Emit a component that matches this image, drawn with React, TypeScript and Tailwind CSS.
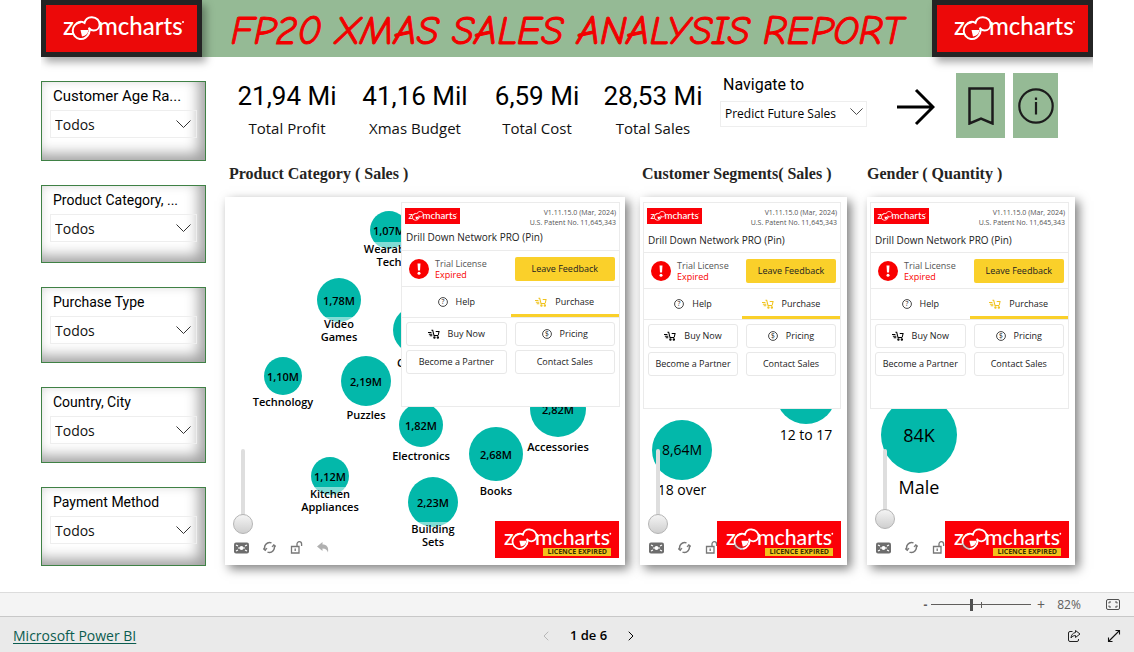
import React, { useState } from "react";
import clsx from "clsx";
import { ChevronLeft, ChevronRight } from "lucide-react";

type Bubble = {
  value: string;
  label: string;
  x: number;
  y: number;
  r: number;
  labelY: number;
};

const slicers = [
  { id: "age", title: "Customer Age Ra...", className: "h-20", titleClass: "text-[15px]" },
  { id: "category", title: "Product Category, ...", className: "h-[78px]", titleClass: "text-sm" },
  { id: "purchase", title: "Purchase Type", className: "h-[76px]", titleClass: "text-sm" },
  { id: "country", title: "Country, City", className: "h-[76px]", titleClass: "text-sm" },
  { id: "payment", title: "Payment Method", className: "h-[79px]", titleClass: "text-sm" },
];

const kpis = [
  { value: "21,94 Mi", label: "Total Profit" },
  { value: "41,16 Mil", label: "Xmas Budget" },
  { value: "6,59 Mi", label: "Total Cost" },
  { value: "28,53 Mi", label: "Total Sales" },
];

const categoryBubbles: Bubble[] = [
  { value: "1,07M", label: "Wearable\nTech", x: 164, y: 33, r: 19, labelY: 45 },
  { value: "1,78M", label: "Video\nGames", x: 114, y: 103, r: 22, labelY: 120 },
  { value: "", label: "Clothes", x: 192, y: 133, r: 24, labelY: 159 },
  { value: "1,10M", label: "Technology", x: 58, y: 179, r: 19, labelY: 198 },
  { value: "2,19M", label: "Puzzles", x: 141, y: 184, r: 25, labelY: 211 },
  { value: "1,82M", label: "Electronics", x: 196, y: 228, r: 22, labelY: 252 },
  { value: "2,68M", label: "Books", x: 271, y: 257, r: 27, labelY: 287 },
  { value: "2,82M", label: "Accessories", x: 333, y: 212, r: 28, labelY: 243 },
  { value: "2,23M", label: "Building\nSets", x: 208, y: 305, r: 25, labelY: 325 },
  { value: "1,12M", label: "Kitchen\nAppliances", x: 105, y: 279, r: 19, labelY: 290 },
];

const segmentBubbles: Bubble[] = [
  { value: "8,64M", label: "18 over", x: 42, y: 253, r: 30, labelY: 283 },
  { value: "", label: "12 to 17", x: 166, y: 197, r: 30, labelY: 228 },
];

const genderBubbles: Bubble[] = [
  { value: "84K", label: "Male", x: 52, y: 238, r: 38, labelY: 278 },
];

const Logo = ({ className }: { className?: string }) => (
  <svg viewBox="-1 -5 124 36" className={className} role="img" aria-label="zoomcharts">
    <g fill="#fff" fontFamily="Lato, sans-serif" fontSize="24" fontWeight="500">
      <text x="0" y="19">z</text>
      <text x="35" y="19">mcharts</text>
    </g>
    <circle cx="120" cy="6" r="1" fill="#fff" />
    <g fill="none" stroke="#fff" strokeWidth="2" strokeLinecap="round">
      <path d="M17 6.500A8.300 8.300 0 1 0 26 17" />
      <path d="M13.500 7.500c2.500-2 5.500-2 8-.5C22.500 3 25.500 1 29 1.200c4.500.2 8 3.500 7.700 7.800-.3 3-2.800 5.500-6 5.500-2 0-3.500-.8-4.500-2" />
      <path d="M26 17.500c.7-1.800.8-3.500.3-5" />
    </g>
    <path d="M17.500 14h8a7.500 7.500 0 0 1-6.500 6.500z" fill="#fff" />
  </svg>
);

const Chevron = ({ className }: { className?: string }) => (
  <svg viewBox="0 0 15 9" className={className} fill="none" stroke="#333" strokeWidth="1" aria-hidden="true">
    <path d="M.5.5l7 7 7-7" />
  </svg>
);

const CartIcon = ({ className }: { className?: string }) => (
  <svg viewBox="0 0 14 12" className={className} fill="none" stroke="currentColor" strokeWidth="1.2" aria-hidden="true">
    <path d="M4 1.500h1.500l1.500 6h5M12 7l1-4.500M9 3h4.500M0 4h4M1 6h4M2 8h3" />
    <circle cx="7.500" cy="10" r=".8" />
    <circle cx="11.500" cy="10" r=".8" />
  </svg>
);

const Badge = ({ mark }: { mark: string }) => (
  <svg viewBox="0 0 12 12" className="size-[10px] overflow-visible" aria-hidden="true">
    <circle cx="6" cy="6" r="5.300" fill="none" stroke="#222" strokeWidth="1" />
    <text x="6" y="8.700" fontSize="8" textAnchor="middle" fill="#222" fontFamily="Open Sans, sans-serif">
      {mark}
    </text>
  </svg>
);

const BrandTile = () => (
  <div className="relative z-10 flex h-[57px] w-[161px] shrink-0 items-center justify-center border-5 border-[#242424] bg-[#ec0909] pl-[5px] shadow-[4px_5px_8px_rgba(0,0,0,0.35)]">
    <Logo className="w-[124px]" />
  </div>
);

const Slicer = ({ id, title, className, titleClass }: (typeof slicers)[number]) => (
  <div
    className={clsx(
      "flex flex-col gap-1 border border-[#3f8145] pt-1 pr-2 pl-2 shadow-[inset_-6px_-6px_14px_rgba(0,0,0,0.38)]",
      className
    )}
  >
    <label htmlFor={id} className={clsx("truncate pl-[3px] font-[Roboto,sans-serif] leading-5", titleClass)}>
      {title}
    </label>
    <div className="relative">
      <select id={id} className="h-7 w-full appearance-none border border-[#eeeeee] pt-px pl-1 text-sm text-[#111]">
        <option>Todos</option>
      </select>
      <Chevron className="pointer-events-none absolute top-[10px] right-[6px] w-[15px]" />
    </div>
  </div>
);

const LicensePanel = ({ compact }: { compact?: boolean }) => {
  const btn =
    "flex h-6 items-center justify-center gap-2 rounded-[3px] border border-[#e8e8e8] bg-white text-[9px] whitespace-nowrap";
  return (
    <div
      className={clsx(
        "absolute z-10 border border-[#ebebeb] bg-white font-['Open_Sans',sans-serif] text-[#222]",
        compact ? "top-[5px] right-[6px] left-[3px] h-[207px]" : "top-[5px] right-[5px] left-[176px] h-[205px]"
      )}
    >
      <div className={clsx("border-b border-[#ebebeb] px-[3px] pt-[5px]", compact ? "h-[50px]" : "h-[48px]")}>
        <div className="flex justify-between">
          <div className="flex h-4 w-[55px] items-center justify-center bg-[#fb0007]">
            <Logo className="w-[50px]" />
          </div>
          <p className="text-right text-[7px] leading-[10px] text-[#555]">
            V1.11.15.0 (Mar, 2024)
            <br />
            U.S. Patent No. 11,645,343
          </p>
        </div>
        <h3 className={clsx("pl-px text-[10px] leading-4 font-medium whitespace-nowrap", compact ? "mt-1" : "mt-px")}>
          Drill Down Network PRO (Pin)
        </h3>
      </div>
      <div className="grid h-9 grid-cols-2 items-center gap-2 border-b border-[#ebebeb] px-1">
        <div className="flex items-center gap-[6px] pl-[3px]">
          <svg viewBox="0 0 20 20" className="size-5 shrink-0" aria-hidden="true">
            <circle cx="10" cy="10" r="10" fill="#f90000" />
            <path d="M8.500 4.500h3l-.5 7h-2z" fill="#fff" />
            <circle cx="10" cy="14.300" r="1.500" fill="#fff" />
          </svg>
          <p className="text-[9px] leading-[11px] whitespace-nowrap text-[#555]">
            Trial License
            <br />
            <span className="text-[#f90000]">Expired</span>
          </p>
        </div>
        <button className="h-6 rounded-[2px] bg-[#fad02a] text-[9px] whitespace-nowrap text-[#222]">Leave Feedback</button>
      </div>
      <div className="grid h-[31px] grid-cols-2 border-b border-[#ebebeb] text-[9px]">
        <button className="flex items-center justify-center gap-2">
          <Badge mark="?" />
          Help
        </button>
        <button className="flex items-center justify-center gap-2 border-b-3 border-[#fad02a] pt-[3px] font-medium">
          <CartIcon className="w-3 text-[#f0c31d]" />
          Purchase
        </button>
      </div>
      <div className="grid grid-cols-2 gap-x-2 gap-y-1 px-1 pt-1">
        <button className={btn}>
          <CartIcon className="w-3 text-black" />
          Buy Now
        </button>
        <button className={btn}>
          <Badge mark="$" />
          Pricing
        </button>
        <button className={btn}>Become a Partner</button>
        <button className={btn}>Contact Sales</button>
      </div>
    </div>
  );
};

const Bubbles = ({ items, textClass }: { items: Bubble[]; textClass: string }) => (
  <>
    {items.map((b) => (
      <div key={b.label} className={clsx("text-black", textClass)}>
        <div
          className="absolute flex items-center justify-center rounded-full bg-[#03b8aa]"
          style={{ left: b.x - b.r, top: b.y - b.r, width: b.r * 2, height: b.r * 2 }}
        >
          {b.value}
        </div>
        <div
          className="absolute -translate-x-1/2 bg-white/50 text-center whitespace-pre"
          style={{ left: b.x, top: b.labelY }}
        >
          {b.label}
        </div>
      </div>
    ))}
  </>
);

const NetworkChart = ({
  name,
  bubbles,
  textClass,
  compact,
  sliderClass,
}: {
  name: string;
  bubbles: Bubble[];
  textClass: string;
  compact?: boolean;
  sliderClass: string;
}) => (
  <div className="relative h-[368px] overflow-hidden bg-white">
    <Bubbles items={bubbles} textClass={textClass} />
    <LicensePanel compact={compact} />
    <input
      type="range"
      aria-label={`${name} zoom`}
      defaultValue={0}
      className={clsx(
        "absolute top-[252px] left-2 w-5 appearance-none bg-transparent [direction:rtl] [writing-mode:vertical-lr]",
        "[&::-webkit-slider-runnable-track]:h-full [&::-webkit-slider-runnable-track]:w-1 [&::-webkit-slider-runnable-track]:rounded-sm [&::-webkit-slider-runnable-track]:bg-[#dedede]",
        "[&::-webkit-slider-thumb]:-ml-2 [&::-webkit-slider-thumb]:size-5 [&::-webkit-slider-thumb]:appearance-none [&::-webkit-slider-thumb]:rounded-full [&::-webkit-slider-thumb]:border [&::-webkit-slider-thumb]:border-[#b5b5b5] [&::-webkit-slider-thumb]:bg-linear-to-b [&::-webkit-slider-thumb]:from-[#f4f4f4] [&::-webkit-slider-thumb]:to-[#cfcfcf]",
        sliderClass
      )}
    />
    <div className="absolute bottom-[11px] left-[9px] flex items-center gap-[14px] text-[#777]">
      <button aria-label="Fit">
        <svg viewBox="0 0 15 12" className="w-[15px]">
          <rect width="15" height="11" y=".5" rx="2" fill="#6d6d6d" />
          <circle cx="7.500" cy="6" r="2" fill="#fff" />
          <path d="M2 3l2 1M2 9l2-1M13 3l-2 1M13 9l-2-1M4 6h7" stroke="#fff" strokeWidth="1.200" />
        </svg>
      </button>
      <button aria-label="Refresh">
        <svg viewBox="0 0 13 13" className="size-[13px]" fill="none" stroke="currentColor" strokeWidth="1.500">
          <path d="M2.300 9A5 5 0 0 1 8.500 1.900M10.700 4A5 5 0 0 1 4.500 11.100" />
          <path d="M0 7.500l2.300 2L4 7M9 6l1.700-2.300L13 5.500" strokeWidth="1.100" />
        </svg>
      </button>
      <button aria-label="Unlock">
        <svg viewBox="0 0 13 13" className="size-[13px]" fill="none" stroke="currentColor" strokeWidth="1.300">
          <path d="M1.500 5.500h7.500v6.500H1.500zM7 5.500V3a2.300 2.300 0 0 1 4.600 0v2" />
          <path d="M5.200 7.500v2.500" />
        </svg>
      </button>
      <button aria-label="Back" className={clsx("relative z-10", compact ? "text-[#555]/30" : "text-[#b0b0b0]")}>
        <svg viewBox="0 0 13 13" className="size-[13px]" fill="currentColor">
          <path d="M0 5.500L5.500 1v2.500c4 0 6.500 2.500 5.500 8-.8-2.500-2.500-4-5.500-4V10z" />
        </svg>
      </button>
    </div>
    <div className="absolute right-[6px] bottom-[7px] h-[37px] w-[124px] bg-[#fb0007] pt-[3px] pl-2">
      <Logo className="w-[110px]" />
      <span className="absolute right-2 bottom-[2px] bg-[#f3c21c] px-1 font-['Open_Sans',sans-serif] text-[7px] leading-2 font-bold whitespace-nowrap text-[#3a3000]">
        LICENCE EXPIRED
      </span>
    </div>
  </div>
);

const ChartTitle = ({ children }: { children: React.ReactNode }) => (
  <h2 className="h-8 font-['Liberation_Serif',serif] text-base leading-[18px] font-bold whitespace-nowrap text-[#252423]">
    {children}
  </h2>
);

const App = () => {
  const [zoom, setZoom] = useState(40);

  return (
    <div className="bg-white font-['Open_Sans','Noto_Sans',sans-serif] text-black">
      <div className="px-[41px]">
        <div className="overflow-hidden pb-4">
          <header className="flex h-[57px] bg-[#95ba95]">
            <BrandTile />
            <h1 className="flex flex-1 items-center justify-center pt-1 font-['Comic_Sans_MS','Comic_Neue',Lato,sans-serif] text-[40px] whitespace-nowrap text-[#f20000] italic [-webkit-text-stroke:1px_#f20000]">
              FP20 XMAS SALES ANALYSIS REPORT
            </h1>
            <BrandTile />
          </header>
        </div>

        <div className="flex h-[519px]">
          {/* Slicers */}
          <aside className="flex w-[165px] shrink-0 flex-col gap-6 pt-2">
            {slicers.map((s) => (
              <Slicer key={s.id} {...s} />
            ))}
          </aside>

          <main className="min-w-0 flex-1 pl-[19px]">
            <section className="flex h-[92px]">
              <div className="grid flex-1 grid-cols-[124fr_132fr_112fr_120fr] pt-[7px] pr-[7px] text-center whitespace-nowrap">
                {kpis.map((k) => (
                  <div key={k.label}>
                    <p className="font-[Roboto,sans-serif] text-[26px] leading-8">{k.value}</p>
                    <p className="pt-[6px] text-[15px] leading-5 text-[#111]">{k.label}</p>
                  </div>
                ))}
              </div>
              <div className="w-[147px]">
                <label htmlFor="navigate" className="block pt-[2px] pl-[3px] font-[Roboto,sans-serif] text-base leading-5">
                  Navigate to
                </label>
                <div className="relative mt-[5px]">
                  <select id="navigate" className="h-[26px] w-full appearance-none border border-[#eeeeee] pl-1 text-xs">
                    <option>Predict Future Sales</option>
                  </select>
                  <Chevron className="pointer-events-none absolute top-2 right-1 w-[13px]" />
                </div>
              </div>
              <button aria-label="Go" className="mt-[15px] ml-[30px] size-[38px]">
                <svg viewBox="0 0 38 38" fill="none" stroke="#000" strokeWidth="3">
                  <path d="M0 19h36M19 2l17 17-17 17" />
                </svg>
              </button>
              <button aria-label="Bookmark" className="ml-[21px] flex h-[65px] w-[49px] items-center justify-center bg-[#95ba95]">
                <svg viewBox="0 0 26 38" className="w-[26px]" fill="none" stroke="#1c1c1c" strokeWidth="2.500">
                  <path d="M1.500 1.500h23v35L13 31.500 1.500 36.500z" />
                </svg>
              </button>
              <button aria-label="Information" className="mr-[35px] ml-2 flex h-[65px] w-[45px] items-center justify-center bg-[#95ba95]">
                <svg viewBox="0 0 36 36" className="w-9" fill="none" stroke="#1c1c1c" strokeWidth="2.200">
                  <circle cx="18" cy="18" r="16.700" />
                  <path d="M18 14v12.500M18 9.500v2.500" />
                </svg>
              </button>
            </section>

            <section className="grid grid-cols-[415fr_227fr_208fr] pr-[18px]">
              <div className="min-w-0 pr-[15px]">
                <div className="pl-1">
                  <ChartTitle>Product Category ( Sales )</ChartTitle>
                </div>
                <div className="shadow-[4px_4px_10px_rgba(0,0,0,0.5)]">
                  <NetworkChart
                    name="Product category"
                    bubbles={categoryBubbles}
                    textClass="text-[11px] leading-[13px] font-semibold"
                    sliderClass="h-[85px]"
                  />
                </div>
              </div>
              <div className="min-w-0 pr-5">
                <div className="pl-[2px]">
                  <ChartTitle>Customer Segments( Sales )</ChartTitle>
                </div>
                <div className="shadow-[4px_4px_10px_rgba(0,0,0,0.5)]">
                  <NetworkChart
                    name="Customer segments"
                    bubbles={segmentBubbles}
                    textClass="text-sm leading-5"
                    sliderClass="h-[85px]"
                    compact
                  />
                </div>
              </div>
              <div className="min-w-0">
                <ChartTitle>Gender ( Quantity )</ChartTitle>
                <div className="shadow-[4px_4px_10px_rgba(0,0,0,0.5)]">
                  <NetworkChart
                    name="Gender"
                    bubbles={genderBubbles}
                    textClass="text-lg leading-6"
                    sliderClass="h-20"
                    compact
                  />
                </div>
              </div>
            </section>
          </main>
        </div>
      </div>

      {/* Zoom bar */}
      <div className="flex h-6 items-center justify-end border-t border-[#dcdcdc] bg-[#f4f4f4] pr-[14px] text-xs text-[#605e5c]">
        <button aria-label="Zoom out" className="w-[11px] font-bold">-</button>
        <div className="relative flex h-4 w-[100px] items-center">
          <input
            type="range"
            aria-label="Zoom"
            value={zoom}
            onChange={(e) => setZoom(Number(e.target.value))}
            className="h-px w-full appearance-none bg-[#605e5c] [&::-webkit-slider-thumb]:h-3 [&::-webkit-slider-thumb]:w-[3px] [&::-webkit-slider-thumb]:appearance-none [&::-webkit-slider-thumb]:bg-[#505050]"
          />
          <span className="absolute top-[5px] left-1/2 h-[6px] w-px bg-[#605e5c]" />
        </div>
        <button aria-label="Zoom in" className="w-5 text-sm">+</button>
        <span className="w-9 text-center">82%</span>
        <button aria-label="Fit to page" className="ml-[19px]">
          <svg viewBox="0 0 14 11" className="w-[14px]" fill="none" stroke="#505050">
            <rect x=".5" y=".5" width="13" height="10" rx="1.500" />
            <path d="M3 4.500V3h2M9 3h2v1.500M11 6.500V8H9M5 8H3V6.500" />
          </svg>
        </button>
      </div>

      <footer className="grid h-9 grid-cols-3 items-center border-t border-[#c8c8c8] bg-[#eaeaea] px-[13px] pt-[2px]">
        <a href="#" className="text-sm text-[#0b5c4f] underline underline-offset-2">
          Microsoft Power BI
        </a>
        <nav className="flex items-center justify-center gap-4 pl-[43px] text-[13px] font-semibold">
          <button aria-label="Previous page">
            <ChevronLeft className="size-4 text-[#b8b8b8]" strokeWidth={1.5} />
          </button>
          1 de 6
          <button aria-label="Next page">
            <ChevronRight className="size-4" strokeWidth={1.5} />
          </button>
        </nav>
        <div className="flex justify-end gap-[26px]">
          <button aria-label="Share">
            <svg viewBox="0 0 14 14" className="size-[14px]" fill="none" stroke="#222" strokeLinejoin="round">
              <path d="M5.500 2.500H3A1.500 1.500 0 0 0 1.500 4v7A1.500 1.500 0 0 0 3 12.500h7a1.500 1.500 0 0 0 1.500-1.500v-1M8.500 1.500L13 5 8.500 8.500v-2C6.500 6.500 5 7.500 4 9c.2-3 1.800-5 4.500-5.500z" />
            </svg>
          </button>
          <button aria-label="Full screen">
            <svg viewBox="0 0 14 14" className="size-[14px]" fill="none" stroke="#111" strokeWidth="1.100">
              <path d="M1.500 12.500l11-11M8.500 1.500h4v4M1.500 8.500v4h4" />
            </svg>
          </button>
        </div>
      </footer>
    </div>
  );
};

export default App;
